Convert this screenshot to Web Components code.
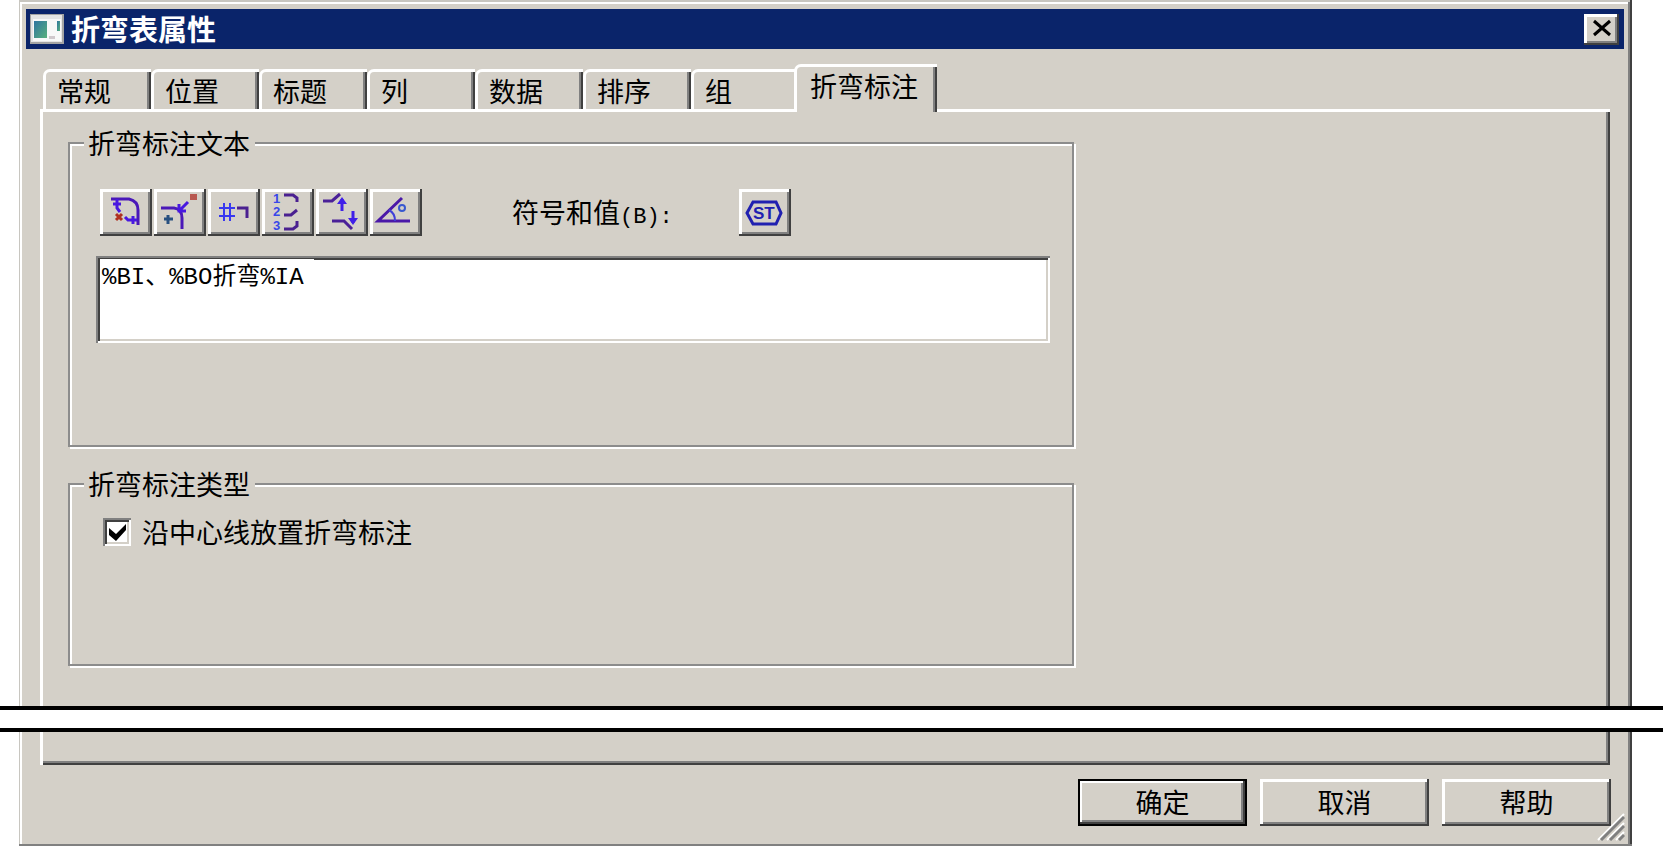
<!DOCTYPE html>
<html lang="zh-CN">
<head>
<meta charset="utf-8">
<title>折弯表属性</title>
<style>
    :root {
        --face: #d4d0c8;
        --light: #ffffff;
        --shadow: #808080;
        --dark: #404040;
        --title: #0a246a;
    }

    body {
        margin: 0;
        background: #fff;
        color: #000;
        font-family: "Noto Sans CJK SC", sans-serif;
        font-size: 27px;
        line-height: 28px;
    }
</style>
</head>
<body>
<bend-dialog titulo="折弯表属性">
    <tab-strip slot="tabs">
        <tab-item>常规</tab-item>
        <tab-item>位置</tab-item>
        <tab-item>标题</tab-item>
        <tab-item>列</tab-item>
        <tab-item>数据</tab-item>
        <tab-item>排序</tab-item>
        <tab-item>组</tab-item>
        <tab-item active>折弯标注</tab-item>
    </tab-strip>

    <group-box titulo="折弯标注文本" class="texto">
        <note-editor value="%BI、%BO折弯%IA"></note-editor>
    </group-box>
    <group-box titulo="折弯标注类型" class="tipo">
        <check-field checked>沿中心线放置折弯标注</check-field>
    </group-box>

    <dialog-button slot="actions" default>确定</dialog-button>
    <dialog-button slot="actions">取消</dialog-button>
    <dialog-button slot="actions">帮助</dialog-button>
</bend-dialog>
<cut-line></cut-line>

<script>
const ICONS = {
    length: `
        <path d="M11 10H29Q38 12 38 21V36" stroke="#4a18b8" stroke-width="3"/>
        <path d="M17 10V19L20 23M13 15H21M25 28L28 31H37M33 27V35" stroke="#4818e0" stroke-width="3"/>
        <path d="M16 25L22 31M22 25L16 31" stroke="#b03020" stroke-width="3"/>`,
    direction: `
        <path d="M7 19H20Q28 20 28 29V40" stroke="#4a18b8" stroke-width="3"/>
        <path d="M34 13L25 22M25 15V22H32" stroke="#4818e0" stroke-width="3"/>
        <path d="M14 26V35M10 30H19" stroke="#285080" stroke-width="3"/>
        <rect x="36" y="5" width="7" height="6" fill="#b85850"/>`,
    number: `
        <path d="M16 14V32M22 14V32M11 19H27M11 27H27" stroke="#3838f0" stroke-width="2"/>
        <path d="M29 19H39V29" stroke="#4a2090" stroke-width="3"/>`,
    order: `
        <text x="11" y="14" font-size="13">1</text>
        <text x="11" y="27" font-size="13">2</text>
        <text x="11" y="41" font-size="13">3</text>
        <path d="M22 6H31L35 9V13M22 26H29L35 21M22 40H31L35 37V32" stroke="#4a2090" stroke-width="3"/>`,
    updown: `
        <path d="M7 12H16L24 5M16 32H28L36 40" stroke="#4a2098" stroke-width="3"/>
        <path d="M26 22V10M37 22V34" stroke="#4020e8" stroke-width="3"/>
        <path d="M26 8L31 15H21ZM37 36L32 29H42Z" fill="#4020e8"/>`,
    angle: `
        <path d="M32 9L8 32H40" stroke="#4a18a8" stroke-width="3"/>
        <path d="M19 21Q25 24 25 32" stroke="#4040d8" stroke-width="2"/>
        <circle cx="32" cy="19" r="3" stroke="#3858d0" stroke-width="2"/>`,
    symbol: `
        <path d="M8 24L14 13H37L42 24L37 35H14Z" stroke="#2020b0" stroke-width="3"/>
        <text class="st" x="14" y="30" font-size="17">ST</text>`
};

// raised 3D edge shared by every push button
const RAISED = `box-shadow: inset -2px -2px var(--dark), inset 3px 3px var(--light), inset -4px -4px var(--shadow);`;

class BendDialog extends HTMLElement {
    constructor() {
        super();
        this.attachShadow({ mode: 'open' });
        this.shadowRoot.innerHTML = `
            <style>
                :host {
                    display: flex;
                    flex-direction: column;
                    position: relative;
                    box-sizing: border-box;
                    min-height: 100vh;
                    margin: 0 31px 0 19px;
                    padding: 9px 8px 20px 7px;
                    background: var(--face);
                    box-shadow: inset 0 -2px var(--shadow), inset -2px 0 var(--dark), inset 1px 2px #c8c6c0, inset -4px 0 var(--shadow), inset 3px 4px var(--light);
                }
                header {
                    display: flex;
                    align-items: center;
                    gap: 7px;
                    height: 40px;
                    padding: 0 5px 0 4px;
                    background: var(--title);
                    color: #fff;
                }
                h1 {
                    flex: 1;
                    margin: 0;
                    padding-bottom: 2px;
                    font-size: 29px;
                    line-height: 36px;
                    font-weight: 700;
                }
                header button {
                    width: 35px;
                    height: 31px;
                    padding: 0;
                    border: 0;
                    background: var(--face);
                    ${RAISED}
                }
                svg { display: block; }
                .pestanas {
                    margin: 15px 0 0 17px;
                    z-index: 1;
                }
                main {
                    flex: 1;
                    display: grid;
                    grid-template-columns: 17fr 9fr;
                    align-content: start;
                    gap: 21px 0;
                    margin: 0 14px;
                    padding: 17px 0 80px 25px;
                    border: solid;
                    border-width: 3px 0 0 3px;
                    border-color: var(--light);
                    box-shadow: inset -2px -2px var(--dark), inset -4px -4px var(--shadow);
                }
                main ::slotted(*) { grid-column: 1; }
                footer {
                    display: flex;
                    justify-content: flex-end;
                    gap: 13px;
                    margin: 14px 13px 0;
                }
                .grip {
                    position: absolute;
                    right: 7px;
                    bottom: 5px;
                }
            </style>
            <header>
                <svg width="34" height="30" viewBox="0 0 34 30" aria-hidden="true">
                    <defs>
                        <linearGradient id="g" x1="0" y1="0" x2="1" y2="1">
                            <stop offset="0" stop-color="#2f75a0"/>
                            <stop offset="1" stop-color="#58b07c"/>
                        </linearGradient>
                    </defs>
                    <rect width="34" height="30" fill="#a4a4a4"/>
                    <rect x="1" y="1" width="31" height="27" fill="#e4e4e4"/>
                    <rect x="3" y="5" width="28" height="22" fill="#f8f8f8"/>
                    <rect x="4" y="7" width="13" height="17" fill="url(#g)"/>
                    <rect x="27" y="7" width="3" height="10" fill="url(#g)"/>
                    <rect x="19" y="22" width="6" height="3" fill="#d0c8cc"/>
                </svg>
                <h1>${this.getAttribute('titulo') || ''}</h1>
                <button type="button" aria-label="关闭">
                    <svg width="35" height="31" viewBox="0 0 35 31" aria-hidden="true">
                        <path d="M10 7L26 21M26 7L10 21" stroke="#000" stroke-width="3"/>
                    </svg>
                </button>
            </header>
            <div class="pestanas"><slot name="tabs"></slot></div>
            <main><slot></slot></main>
            <footer><slot name="actions"></slot></footer>
            <svg class="grip" width="28" height="28" viewBox="0 0 28 28" aria-hidden="true">
                <path d="M1 27L27 1M10 27L27 10M19 27L27 19" stroke="#fff" stroke-width="2"/>
                <path d="M4 27L27 4M13 27L27 13M22 27L27 22" stroke="#808080" stroke-width="3"/>
            </svg>
        `;
    }
}

class TabStrip extends HTMLElement {
    constructor() {
        super();
        this.attachShadow({ mode: 'open' });
        this.shadowRoot.innerHTML = `
            <style>
                :host {
                    display: flex;
                    align-items: flex-end;
                    height: 45px;
                }
            </style>
            <slot></slot>
        `;
        this.setAttribute('role', 'tablist');
    }
}

class TabItem extends HTMLElement {
    constructor() {
        super();
        this.attachShadow({ mode: 'open' });
        this.shadowRoot.innerHTML = `
            <style>
                :host {
                    display: block;
                    width: 108px;
                }
                :host([active]) {
                    width: 143px;
                    margin: 0 0 -3px -5px;
                    z-index: 1;
                }
                button {
                    display: block;
                    width: 100%;
                    height: 40px;
                    padding: 0 0 0 11px;
                    border: solid var(--light);
                    border-width: 3px 0 0 3px;
                    border-top-left-radius: 7px;
                    background: linear-gradient(to left, var(--dark) 2px, var(--shadow) 2px 4px, var(--face) 4px);
                    color: inherit;
                    font: inherit;
                    text-align: left;
                    white-space: nowrap;
                }
                :host([active]) button {
                    height: 48px;
                    padding: 0 0 8px 13px;
                }
            </style>
            <button type="button" role="tab" aria-selected="${this.hasAttribute('active')}"><slot></slot></button>
        `;
    }
}

class GroupBox extends HTMLElement {
    constructor() {
        super();
        this.attachShadow({ mode: 'open' });
        this.shadowRoot.innerHTML = `
            <style>
                :host {
                    display: block;
                    --alto: 318px;
                    --arriba: 32px;
                }
                :host(.tipo) {
                    --alto: 196px;
                    --arriba: 20px;
                }
                /* etched line: grey border with a white one beside it */
                fieldset {
                    box-sizing: border-box;
                    min-height: var(--alto);
                    margin: 0 2px 2px 0;
                    padding: var(--arriba) 22px 20px 26px;
                    border: 2px solid #8c8c8c;
                    box-shadow: 2px 2px var(--light), inset 2px 2px var(--light);
                }
                legend {
                    margin-left: -12px;
                    padding: 0 5px 0 4px;
                    background: var(--face);
                    line-height: 28px;
                }
            </style>
            <fieldset>
                <legend>${this.getAttribute('titulo') || ''}</legend>
                <slot></slot>
            </fieldset>
        `;
    }
}

class NoteEditor extends HTMLElement {
    constructor() {
        super();
        this.attachShadow({ mode: 'open' });
        this.shadowRoot.innerHTML = `
            <style>
                :host { display: block; }
                .barra {
                    display: flex;
                    align-items: center;
                    gap: 2px;
                    padding-left: 4px;
                    margin-bottom: 20px;
                }
                label {
                    margin: 0 64px 0 88px;
                    padding-top: 4px;
                    white-space: nowrap;
                }
                label span {
                    font-family: "Liberation Mono", monospace;
                    font-size: 22px;
                }
                .campo { position: relative; }
                /* the edit line is painted over the sunken top edge */
                .campo::before {
                    content: "";
                    position: absolute;
                    left: 4px;
                    top: 3px;
                    width: 214px;
                    height: 4px;
                    background: #fff;
                }
                textarea {
                    display: block;
                    box-sizing: border-box;
                    width: 100%;
                    height: 87px;
                    margin: 0;
                    padding: 8px 6px;
                    border: 0;
                    border-radius: 0;
                    outline: 0;
                    resize: none;
                    background: #fff;
                    box-shadow: inset 2px 2px var(--shadow), inset -2px -2px var(--light), inset 4px 4px var(--dark), inset -4px -4px var(--face);
                    color: #000;
                    font-family: "Liberation Mono", "Noto Sans CJK SC", monospace;
                    font-size: 24px;
                    line-height: 28px;
                }
            </style>
            <div class="barra">
                <tool-button icon="length" label="折弯长度"></tool-button>
                <tool-button icon="direction" label="折弯方向"></tool-button>
                <tool-button icon="number" label="折弯编号"></tool-button>
                <tool-button icon="order" label="折弯顺序"></tool-button>
                <tool-button icon="updown" label="上下折弯"></tool-button>
                <tool-button icon="angle" label="折弯角度"></tool-button>
                <label for="nota">符号和值<span>(B):</span></label>
                <tool-button icon="symbol" label="符号和值"></tool-button>
            </div>
            <div class="campo"><textarea id="nota" spellcheck="false">${this.getAttribute('value') || ''}</textarea></div>
        `;
    }
}

class ToolButton extends HTMLElement {
    constructor() {
        super();
        this.attachShadow({ mode: 'open' });
        this.render();
    }

    static get observedAttributes() {
        return ['icon', 'label'];
    }

    attributeChangedCallback() {
        this.render();
    }

    render() {
        const icon = this.getAttribute('icon') || '';
        const label = this.getAttribute('label') || '';

        this.shadowRoot.innerHTML = `
            <style>
                :host { display: block; }
                button {
                    display: block;
                    width: 52px;
                    height: 47px;
                    padding: 0;
                    border: 0;
                    background: var(--face);
                    ${RAISED}
                }
                svg {
                    display: block;
                    fill: none;
                }
                text {
                    fill: #3848e8;
                    font-family: "Liberation Sans", sans-serif;
                    font-weight: 700;
                }
                .st { fill: #2020b0; }
            </style>
            <button type="button" aria-label="${label}">
                <svg width="52" height="47" viewBox="0 0 52 47" aria-hidden="true">${ICONS[icon] || ''}</svg>
            </button>
        `;
    }
}

class CheckField extends HTMLElement {
    constructor() {
        super();
        this.attachShadow({ mode: 'open' });
        this.shadowRoot.innerHTML = `
            <style>
                :host {
                    display: block;
                    padding-left: 7px;
                }
                label {
                    display: inline-flex;
                    align-items: center;
                    gap: 11px;
                }
                input {
                    appearance: none;
                    width: 28px;
                    height: 28px;
                    margin: 0;
                    background: #fff;
                    box-shadow: inset 2px 2px var(--shadow), inset -2px -2px var(--light), inset 4px 4px var(--dark), inset -4px -4px var(--face);
                }
                .marca {
                    display: grid;
                    place-items: center;
                }
                .marca > * { grid-area: 1 / 1; }
                svg {
                    display: none;
                    pointer-events: none;
                }
                input:checked + svg { display: block; }
            </style>
            <label>
                <span class="marca">
                    <input type="checkbox" ${this.hasAttribute('checked') ? 'checked' : ''}>
                    <svg width="28" height="28" viewBox="0 0 28 28" aria-hidden="true">
                        <path d="M6 10L13 16L23 6V12L13 23L6 17Z"/>
                    </svg>
                </span>
                <span><slot></slot></span>
            </label>
        `;
    }
}

class DialogButton extends HTMLElement {
    constructor() {
        super();
        this.attachShadow({ mode: 'open' });
        this.shadowRoot.innerHTML = `
            <style>
                :host { display: block; }
                button {
                    display: block;
                    width: 169px;
                    height: 47px;
                    padding: 0 0 2px;
                    border: 0;
                    background: var(--face);
                    color: inherit;
                    font: inherit;
                    ${RAISED}
                }
                :host([default]) button {
                    box-shadow: inset 0 0 0 2px #000, inset -4px -4px var(--dark), inset 4px 4px var(--light), inset -6px -6px var(--shadow);
                }
            </style>
            <button type="button"><slot></slot></button>
        `;
    }
}

// white strip between two rules where the window is cut short
class CutLine extends HTMLElement {
    constructor() {
        super();
        this.attachShadow({ mode: 'open' });
        this.shadowRoot.innerHTML = `
            <style>
                :host {
                    display: block;
                    position: absolute;
                    left: 0;
                    right: 0;
                    bottom: 114px;
                    height: 18px;
                    border: solid #000;
                    border-width: 4px 0;
                    background: #fff;
                }
            </style>
        `;
    }
}

customElements.define('tool-button', ToolButton);
customElements.define('tab-strip', TabStrip);
customElements.define('tab-item', TabItem);
customElements.define('group-box', GroupBox);
customElements.define('note-editor', NoteEditor);
customElements.define('check-field', CheckField);
customElements.define('dialog-button', DialogButton);
customElements.define('cut-line', CutLine);
customElements.define('bend-dialog', BendDialog);
</script>
</body>
</html>
